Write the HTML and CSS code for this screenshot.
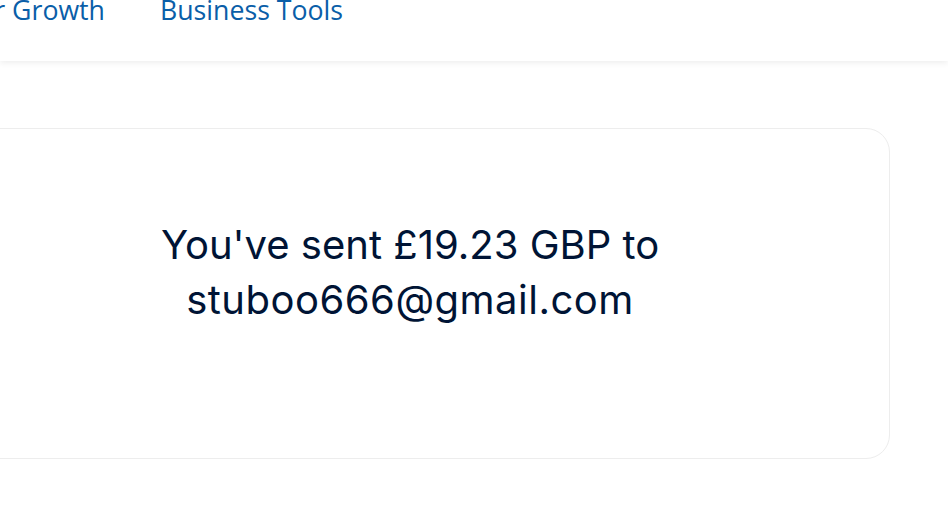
FILE: index.html
```html
<!DOCTYPE html>
<html>
<head>
<meta charset="utf-8">
<link rel="stylesheet" href="styles.css">
</head>
<body>
<header class="nav">
  <ul class="nav-list">
    <li class="nav-item nav-item-cut"><span>Tools for Growth</span></li>
    <li class="nav-item">Business Tools</li>
  </ul>
</header>
<main class="main">
  <section class="card">
    <p class="message">You've sent £19.23 GBP to <span class="email">stuboo666@gmail.com</span></p>
  </section>
</main>
</body>
</html>
```
FILE: styles.css
```css
html, body {
  margin: 0;
  padding: 0;
  background: #ffffff;
  overflow: hidden;
}
body {
  width: 948px;
  height: 510px;
  font-family: Inter, "Liberation Sans", sans-serif;
}
.nav {
  height: 61px;
  background: #fff;
  box-shadow: 0 2px 6px rgba(0,0,0,0.07);
  position: relative;
  z-index: 1;
  overflow: hidden;
}
.nav-list {
  list-style: none;
  margin: -10px 0 0;
  padding: 0;
  display: flex;
  gap: 55px;
}
.nav-item {
  font-family: "Open Sans", sans-serif;
  font-size: 26.7px;
  color: #0a5ea8;
  white-space: nowrap;
  line-height: 40px;
}
.nav-item-cut {
  flex: none;
  width: 105px;
  display: flex;
  justify-content: flex-end;
}
.main {
  padding-top: 67px;
  display: flex;
}
.card {
  flex: none;
  width: 960px;
  height: 331px;
  margin-left: -70px;
  border: 1px solid #ededed;
  border-radius: 24px;
  background: #fff;
  box-sizing: border-box;
  display: flex;
  align-items: flex-start;
  justify-content: center;
}
.message {
  margin: 88px 0 0;
  width: 540px;
  text-align: center;
  font-size: 40px;
  line-height: 55px;
  color: #001435;
}
.email {
  letter-spacing: 0.5px;
}
```
